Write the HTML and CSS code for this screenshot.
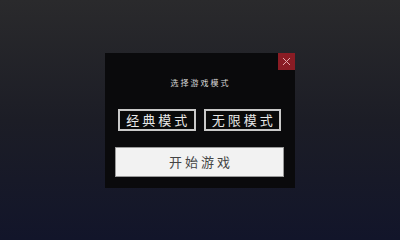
FILE: index.html
```html
<!DOCTYPE html>
<html lang="zh-CN">
<head>
    <meta charset="UTF-8">
    <meta name="viewport" content="width=device-width, initial-scale=1.0">
    <title>选择游戏模式</title>
    <link rel="stylesheet" href="styles.css">
</head>
<body>
    <div class="dialog">
        <button class="close" type="button" aria-label="关闭">
            <svg width="9" height="9" viewBox="0 0 9 9">
                <path d="M1 1L8 8M8 1L1 8" stroke="#e6a9ad" stroke-width="1" fill="none"/>
            </svg>
        </button>
        <div class="title">选择游戏模式</div>
        <div class="modes">
            <button class="mode" type="button">经典模式</button>
            <button class="mode" type="button">无限模式</button>
        </div>
        <button class="start" type="button">开始游戏</button>
    </div>
</body>
</html>
```

FILE: styles.css
```css
html, body {
    margin: 0;
    height: 100%;
}
body {
    font-family: "Noto Sans CJK SC", "Noto Sans", sans-serif;
    background: linear-gradient(to bottom, #2a2a2c 0%, #1c1d26 50%, #12152a 100%);
    display: flex;
    align-items: center;
    justify-content: center;
}
.dialog {
    position: relative;
    width: 190px;
    box-sizing: border-box;
    padding: 24px 11px 11px 10px;
    background-color: #0a0a0c;
    display: flex;
    flex-direction: column;
}
.close {
    position: absolute;
    top: 0;
    right: 0;
    width: 17px;
    height: 17px;
    padding: 0;
    border: none;
    background-color: #8a1c24;
    display: flex;
    align-items: center;
    justify-content: center;
}
.title {
    color: #d8d8d8;
    font-size: 8px;
    line-height: 12px;
    letter-spacing: 2px;
    text-align: center;
    padding-left: 2px;
}
.modes {
    display: flex;
    gap: 8px;
    margin: 20px 3px 16px 3px;
}
.mode {
    flex: 1;
    height: 22px;
    padding: 0 0 0 3px;
    border: 2px solid #c9c9c9;
    background-color: #0a0a0a;
    color: #e8e8e8;
    font-family: inherit;
    font-size: 13px;
    letter-spacing: 3px;
    line-height: 16px;
}
.start {
    height: 30px;
    padding: 0 0 0 3px;
    border: 1px solid #9a9a9a;
    background-color: #f2f2f2;
    color: #444;
    font-family: inherit;
    font-size: 13px;
    letter-spacing: 3px;
}
```
